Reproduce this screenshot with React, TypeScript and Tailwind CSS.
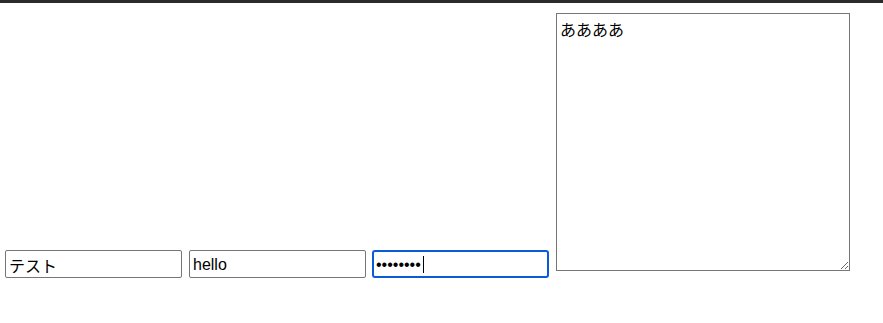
const font = "font-['Liberation_Sans','Noto_Sans_CJK_JP',sans-serif]";

export default function App() {
  return (
    <div className={`min-h-[323px] bg-white text-black ${font}`}>
      <div className="h-[3px] bg-[#2b2b2d]" />
      <div className="flex items-end pl-[5px] pt-[10px]">
        <input
          type="text"
          defaultValue="テスト"
          className="box-border h-[28px] w-[177px] rounded-[2px] border border-[#767676] px-[3px] pt-[1px] text-[16px] outline-none"
        />
        <input
          type="text"
          defaultValue="hello"
          className="ml-[7px] box-border h-[28px] w-[177px] rounded-[2px] border border-[#767676] px-[3px] pt-[1px] text-[16px] outline-none"
        />
        <div className="relative ml-[6px]">
          <input
            type="password"
            defaultValue="password"
            className="box-border block h-[28px] w-[177px] rounded-[3px] border-2 border-[#0a5bd6] px-[2px] pt-[1px] text-[16px] outline-none"
          />
          {/* text caret */}
          <span className="absolute left-[51px] top-[6px] h-[17px] w-px bg-black" />
        </div>
        <textarea
          defaultValue="ああああ"
          className="mb-[7px] ml-[7px] box-border h-[258px] w-[294px] border border-[#767676] px-[3px] pt-[7px] text-[16px] leading-[20px] outline-none"
        />
      </div>
    </div>
  );
}
